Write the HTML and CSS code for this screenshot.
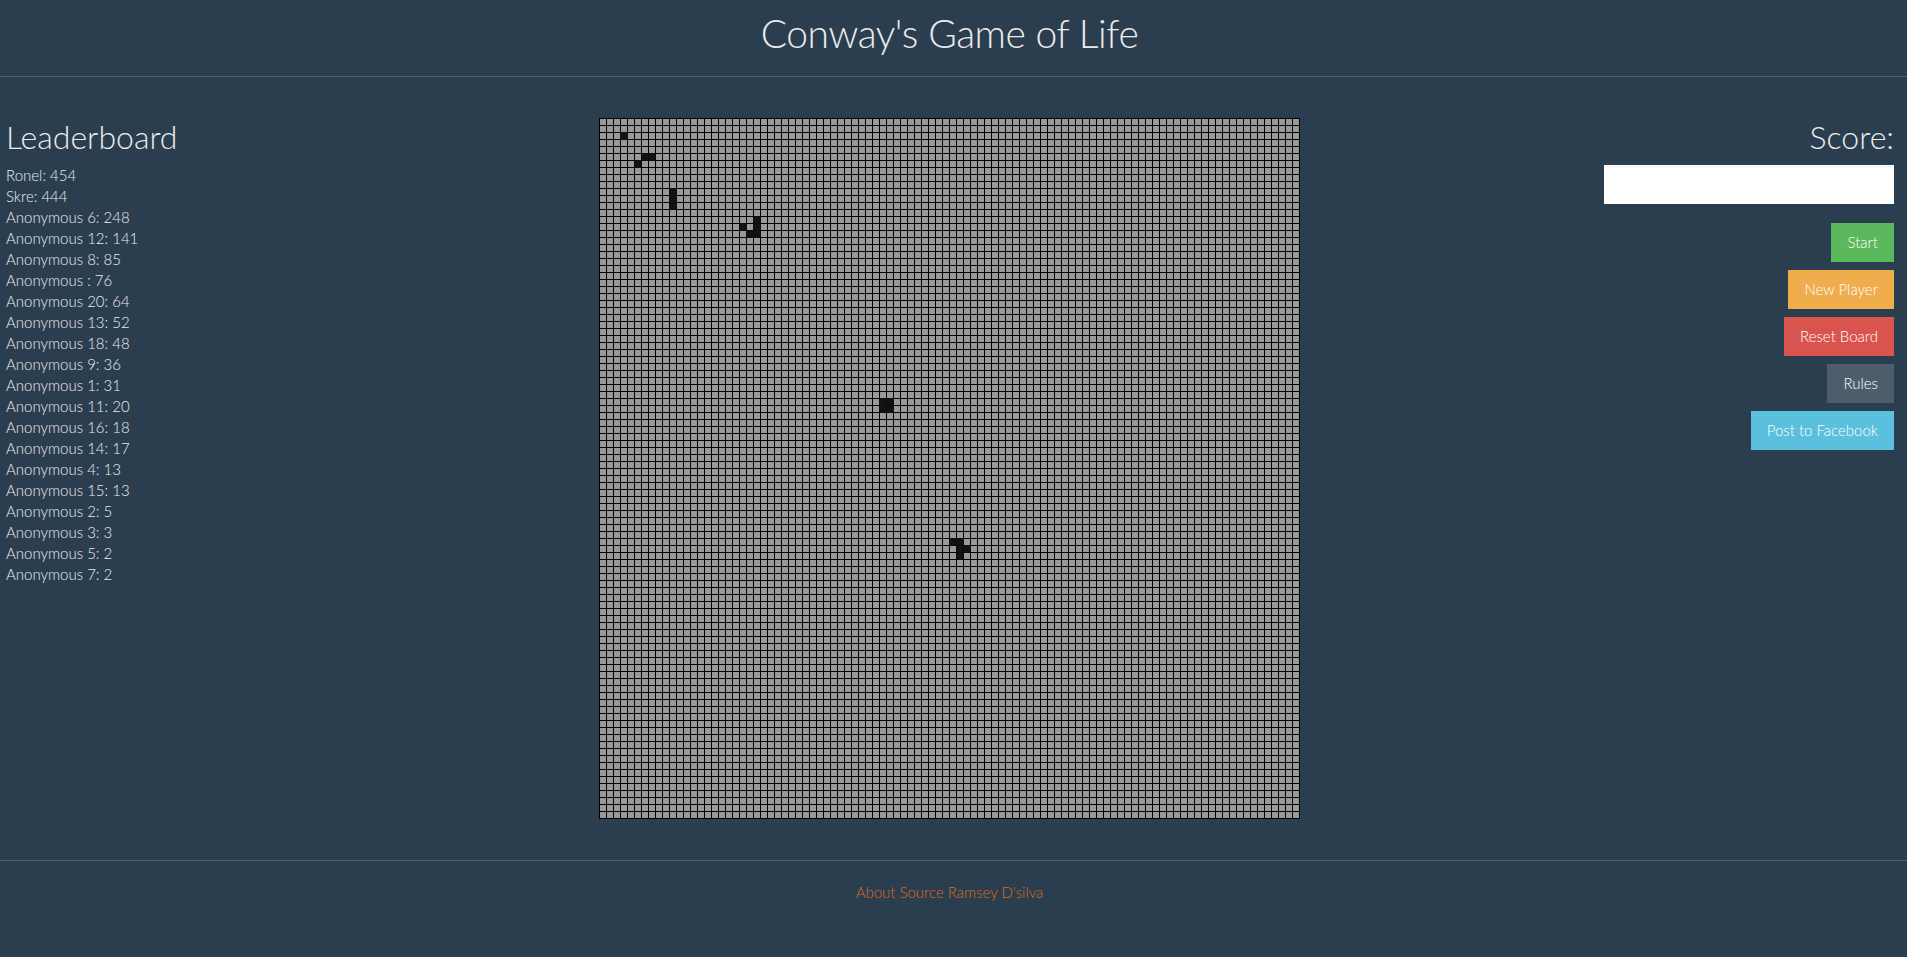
FILE: index.html
```html
<!DOCTYPE html>
<html lang="en">
<head>
<meta charset="utf-8">
<title>Conway's Game of Life</title>
<link rel="stylesheet" href="styles.css">
</head>
<body>
<header class="site-header">
  <h1 class="title">Conway's Game of Life</h1>
</header>
<main class="layout">
  <section class="leaderboard">
    <h2 class="section-title">Leaderboard</h2>
    <ul class="scores">
      <li>Ronel: 454</li>
      <li>Skre: 444</li>
      <li>Anonymous 6: 248</li>
      <li>Anonymous 12: 141</li>
      <li>Anonymous 8: 85</li>
      <li>Anonymous : 76</li>
      <li>Anonymous 20: 64</li>
      <li>Anonymous 13: 52</li>
      <li>Anonymous 18: 48</li>
      <li>Anonymous 9: 36</li>
      <li>Anonymous 1: 31</li>
      <li>Anonymous 11: 20</li>
      <li>Anonymous 16: 18</li>
      <li>Anonymous 14: 17</li>
      <li>Anonymous 4: 13</li>
      <li>Anonymous 15: 13</li>
      <li>Anonymous 2: 5</li>
      <li>Anonymous 3: 3</li>
      <li>Anonymous 5: 2</li>
      <li>Anonymous 7: 2</li>
    </ul>
  </section>
  <section class="board-wrap">
    <div class="board">
      <div class="cell alive" style="grid-row:3;grid-column:4"></div>
      <div class="cell alive" style="grid-row:6;grid-column:7"></div>
      <div class="cell alive" style="grid-row:6;grid-column:8"></div>
      <div class="cell alive" style="grid-row:7;grid-column:6"></div>
      <div class="cell alive" style="grid-row:11;grid-column:11"></div>
      <div class="cell alive" style="grid-row:12;grid-column:11"></div>
      <div class="cell alive" style="grid-row:13;grid-column:11"></div>
      <div class="cell alive" style="grid-row:15;grid-column:23"></div>
      <div class="cell alive" style="grid-row:16;grid-column:21"></div>
      <div class="cell alive" style="grid-row:16;grid-column:23"></div>
      <div class="cell alive" style="grid-row:17;grid-column:22"></div>
      <div class="cell alive" style="grid-row:17;grid-column:23"></div>
      <div class="cell alive" style="grid-row:41;grid-column:41"></div>
      <div class="cell alive" style="grid-row:41;grid-column:42"></div>
      <div class="cell alive" style="grid-row:42;grid-column:41"></div>
      <div class="cell alive" style="grid-row:42;grid-column:42"></div>
      <div class="cell alive" style="grid-row:61;grid-column:51"></div>
      <div class="cell alive" style="grid-row:61;grid-column:52"></div>
      <div class="cell alive" style="grid-row:62;grid-column:52"></div>
      <div class="cell alive" style="grid-row:62;grid-column:53"></div>
      <div class="cell alive" style="grid-row:63;grid-column:52"></div>
    </div>
  </section>
  <section class="controls">
    <h2 class="section-title">Score:</h2>
    <input class="score-input" type="text" aria-label="Score">
    <div class="buttons">
      <button class="btn btn-success">Start</button>
      <button class="btn btn-warning">New Player</button>
      <button class="btn btn-danger">Reset Board</button>
      <button class="btn btn-default">Rules</button>
      <button class="btn btn-info">Post to Facebook</button>
    </div>
  </section>
</main>
<footer class="site-footer">
  <a href="#" class="footer-link">About</a> <a href="#" class="footer-link">Source</a> <a href="#" class="footer-link">Ramsey D'silva</a>
</footer>
</body>
</html>
```
FILE: styles.css
```css
* { box-sizing: border-box; }

html, body {
  margin: 0;
  padding: 0;
}

body {
  background: #2b3e50;
  color: #ebebeb;
  font-family: "Lato", "Liberation Sans", sans-serif;
  font-weight: 300;
  font-size: 15px;
  line-height: 21px;
  min-height: 957px;
}

.site-header {
  padding: 12px 0 21px;
  border-bottom: 1px solid #4e5d6c;
  text-align: center;
}

.title {
  margin: 0;
  font-size: 39px;
  line-height: 43px;
  font-weight: 300;
  letter-spacing: -0.45px;
  padding-left: 5px;
  padding-right: 13px;
}

.layout {
  display: grid;
  grid-template-columns: 1fr 701px 1fr;
  align-items: start;
  padding: 41px 13px 41px 5px;
}

.section-title {
  margin: 1px 0 10.5px;
  font-size: 32px;
  line-height: 35.2px;
  font-weight: 300;
}

.leaderboard {
  padding-left: 1px;
}

.scores {
  list-style: none;
  margin: 0;
  padding: 0;
}

.scores li {
  line-height: 21px;
}

.board {
  display: grid;
  grid-template-columns: repeat(100, 6px);
  grid-template-rows: repeat(100, 6px);
  gap: 1px;
  padding: 1px;
  width: 701px;
  height: 701px;
  background-color: #999999;
  background-image:
    linear-gradient(to right, #000 1px, transparent 1px),
    linear-gradient(to bottom, #000 1px, transparent 1px);
  background-size: 7px 7px;
  background-position: 0 0;
}

.cell.alive {
  background: #121212;
  box-shadow: 0 0 0 1px #0c0c0c;
}

.controls {
  text-align: right;
}

.score-input {
  display: block;
  width: 290px;
  height: 39px;
  margin: 0 0 0 auto;
  border: 1px solid transparent;
  border-radius: 0;
  background: #fff;
  box-shadow: inset 0 1px 1px rgba(0, 0, 0, 0.075);
  font: inherit;
  padding: 8px 12px;
}

.buttons {
  display: flex;
  flex-direction: column;
  align-items: flex-end;
  gap: 8px;
  margin-top: 19px;
}

.btn {
  font-family: inherit;
  font-weight: 300;
  font-size: 15px;
  line-height: 21px;
  padding: 8px 15px;
  border: 1px solid transparent;
  border-radius: 0;
  color: #ffffff;
  cursor: pointer;
}

.btn-success { background: #5cb85c; }
.btn-warning { background: #f0ad4e; }
.btn-danger { background: #d9534f; }
.btn-default { background: #4e5d6c; }
.btn-info { background: #5bc0de; }

.site-footer {
  border-top: 1px solid #4e5d6c;
  padding: 21px 13px 0 5px;
  text-align: center;
  line-height: 21px;
}

.footer-link {
  color: #df691a;
  text-decoration: none;
}
```
